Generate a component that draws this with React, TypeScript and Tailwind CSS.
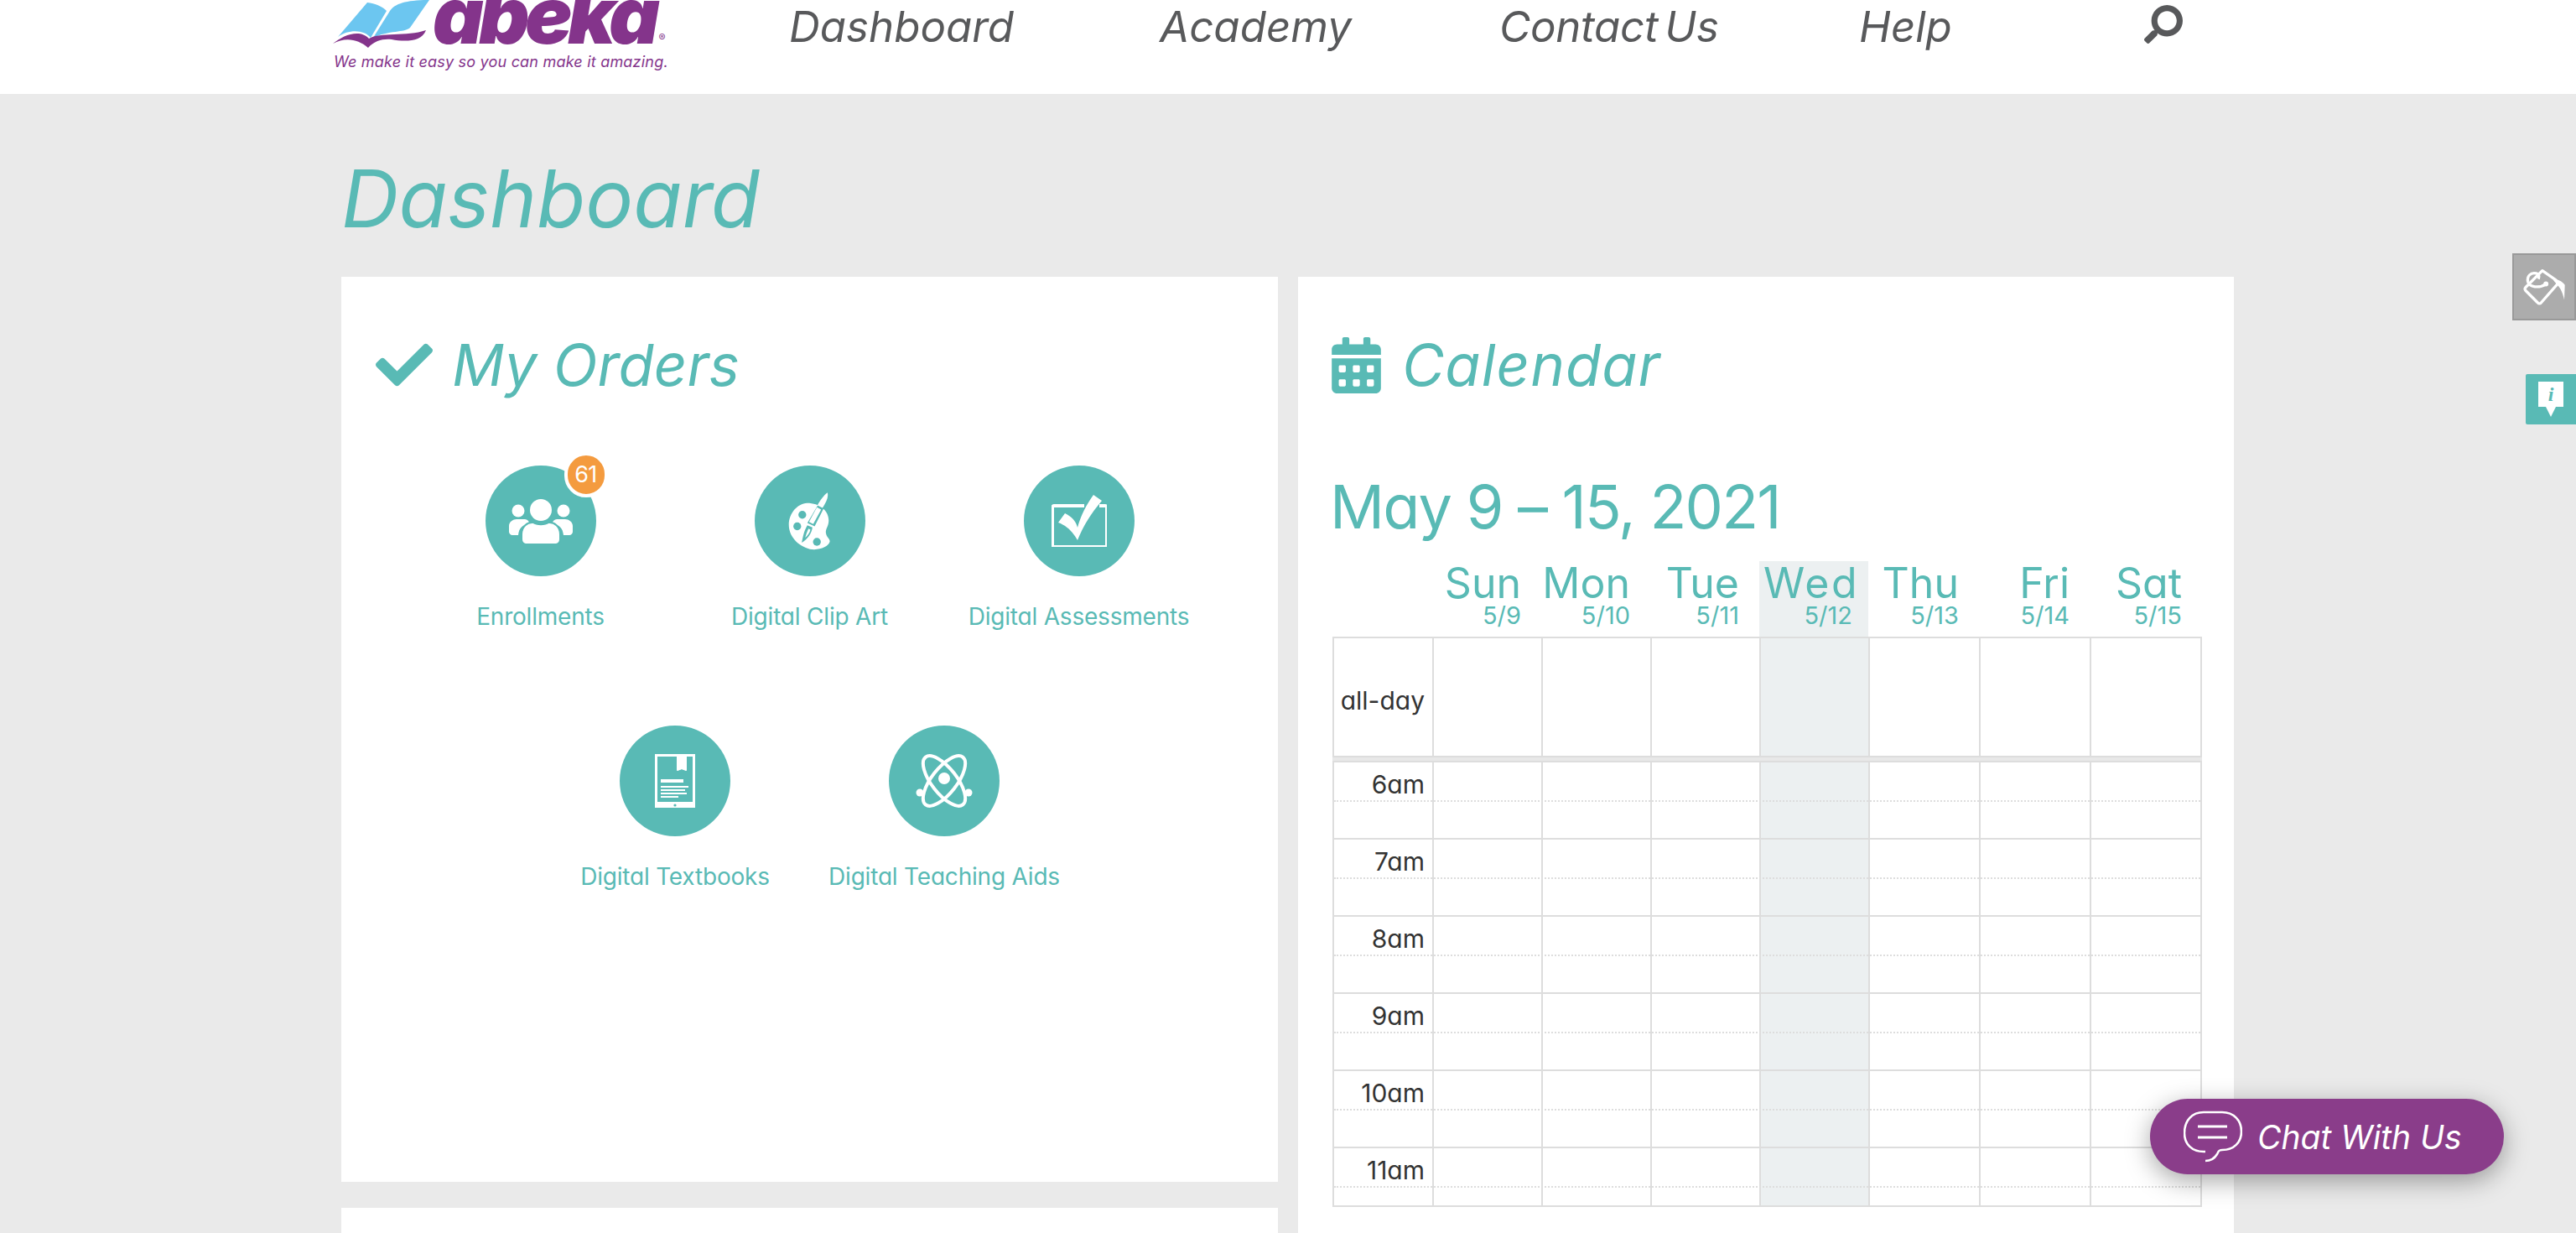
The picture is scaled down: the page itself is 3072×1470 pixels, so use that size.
import { FaCalendarAlt, FaCheck, FaSearch } from "react-icons/fa";

const DISPLAY = "font-['Inter','Lato',sans-serif] [font-feature-settings:'cv11']";

const NAV = [
  { label: "Dashboard", cls: "w-[442px]" },
  { label: "Academy", cls: "w-[405px]" },
  { label: "Contact Us", cls: "w-[429px] tracking-[-0.3px] [word-spacing:-6px]" },
  { label: "Help", cls: "w-[339px]" },
];

const DAYS = [
  { name: "Sun", date: "5/9" },
  { name: "Mon", date: "5/10" },
  { name: "Tue", date: "5/11" },
  { name: "Wed", date: "5/12", today: true },
  { name: "Thu", date: "5/13" },
  { name: "Fri", date: "5/14" },
  { name: "Sat", date: "5/15" },
];

const HOURS = ["6am", "7am", "8am", "9am", "10am", "11am"];

function PeopleIcon() {
  return (
    <svg viewBox="0 0 76 54" className="w-[76px] h-[54px]" fill="#fff">
      <circle cx="38" cy="14" r="13" />
      <circle cx="11" cy="15" r="7.5" />
      <circle cx="65" cy="15" r="7.5" />
      <path d="M0 33C0 28 5 25 9 25H17C22 25 24 27 24 30C16 32 12 35 11 44H4C2 44 0 42 0 40Z" />
      <path d="M76 33C76 28 71 25 67 25H59C54 25 52 27 52 30C60 32 64 35 65 44H72C74 44 76 42 76 40Z" />
      <path
        d="M15 49V43C15 34 22 28 29 29C33 32 43 32 47 29C54 28 61 34 61 43V49C61 52 59 55 56 55H20C17 55 15 52 15 49Z"
        stroke="#59bab5"
        strokeWidth="2"
      />
    </svg>
  );
}

function PaletteIcon() {
  return (
    <svg viewBox="118 92 152 212" className="w-[51px] h-[71px]">
      <path
        d="M185 133C150 135 120 170 120 210C120 250 150 285 195 297C225 303 262 290 266 270C266 258 255 258 252 240C250 225 262 215 262 195C262 160 230 133 185 133Z"
        fill="#fff"
      />
      <circle cx="168" cy="175" r="14" fill="#59bab5" />
      <circle cx="150" cy="216" r="14" fill="#59bab5" />
      <circle cx="220" cy="271" r="14" fill="#59bab5" />
      <path d="M226 136L246 148L212 216L186 204Z" fill="#59bab5" />
      <path d="M186 212L204 220C202 240 188 262 166 274C170 256 172 236 186 212Z" fill="#59bab5" />
      <path d="M190 224L197 228C194 240 186 250 178 256C182 246 184 236 190 224Z" fill="#fff" />
      <path d="M258 96C262 115 250 135 240 150L222 141C230 125 245 105 258 96Z" fill="#fff" />
      <path d="M220 148L235 156L207 208L192 200Z" fill="#fff" />
    </svg>
  );
}

function AssessmentIcon() {
  return (
    <svg viewBox="0 0 66 62" className="w-[66px] h-[62px]">
      <path
        d="M39 13H3C2 13 1 14 1 15V60C1 61 2 62 3 62H64C65 62 66 61 66 60V15C66 14 65 13 64 13H57"
        fill="none"
        stroke="#fff"
        strokeWidth="4"
      />
      <path d="M8 33L16 22C24 26 29 31 31 39C35 24 42 11 50 0L60 7C47 22 38 37 31 54C26 45 19 37 8 33Z" fill="#fff" />
    </svg>
  );
}

function TabletIcon() {
  return (
    <svg viewBox="0 0 50 66" className="w-[50px] h-[66px]">
      <path d="M1 1H49V65H1Z" fill="#fff" />
      <path d="M4 4H27V21L33 19L39 21V4H46V58H4Z" fill="#59bab5" />
      <path d="M28 1H38V21L33 19L28 21Z" fill="#fff" />
      <rect x="8" y="31" width="27" height="4" fill="#fff" />
      <rect x="8" y="39" width="33" height="2" fill="#fff" />
      <rect x="8" y="43" width="29" height="2" fill="#fff" />
      <rect x="8" y="47" width="31" height="2" fill="#fff" />
      <rect x="8" y="51" width="21" height="2" fill="#fff" />
      <circle cx="25" cy="62" r="1.6" fill="#59bab5" />
    </svg>
  );
}

function AtomIcon() {
  return (
    <svg viewBox="0 0 68 64" className="w-[68px] h-[64px]" fill="none" stroke="#fff" strokeWidth="4">
      <ellipse cx="34" cy="32" rx="15" ry="36" transform="rotate(-38 34 32)" />
      <ellipse cx="34" cy="32" rx="15" ry="36" transform="rotate(38 34 32)" />
      <circle cx="34" cy="29" r="7" fill="#fff" stroke="none" />
      <circle cx="5" cy="46" r="4.5" fill="#fff" stroke="none" />
      <circle cx="63" cy="46" r="4.5" fill="#fff" stroke="none" />
    </svg>
  );
}

function OrderItem({
  label,
  children,
  badge,
}: {
  label: string;
  children: React.ReactNode;
  badge?: string;
}) {
  return (
    <div className="w-[321px] h-[310px] flex flex-col items-center">
      <div className="relative w-[132px] h-[132px] rounded-full bg-[#59bab5] flex items-center justify-center">
        {children}
        {badge && (
          <span className="absolute left-[94px] top-[-16px] w-[44px] h-[46px] box-content rounded-full bg-[#f49b3f] border-[4px] border-white flex items-center justify-center text-white text-[27px] tracking-[-0.5px] font-['Inter',sans-serif]">
            {badge}
          </span>
        )}
      </div>
      <div className={`mt-[28px] text-[28px] leading-[40px] tracking-[-0.2px] whitespace-nowrap text-[#59bab5] ${DISPLAY}`}>
        {label}
      </div>
    </div>
  );
}

function MyOrders() {
  return (
    <section className="bg-white h-[1079px] pt-[70px]">
      <div className="flex items-center pl-[32px] h-[70px]">
        <FaCheck className="w-[86px] h-[68px] text-[#59bab5]" />
        <h2 className={`ml-[14px] text-[69px] leading-none italic text-[#59bab5] ${DISPLAY}`}>My Orders</h2>
      </div>
      <div className="mt-[85px] flex flex-wrap justify-center">
        <OrderItem label="Enrollments" badge="61">
          <PeopleIcon />
        </OrderItem>
        <OrderItem label="Digital Clip Art">
          <PaletteIcon />
        </OrderItem>
        <OrderItem label="Digital Assessments">
          <AssessmentIcon />
        </OrderItem>
        <OrderItem label="Digital Textbooks">
          <TabletIcon />
        </OrderItem>
        <OrderItem label="Digital Teaching Aids">
          <AtomIcon />
        </OrderItem>
      </div>
    </section>
  );
}

function Calendar() {
  return (
    <section className="bg-white h-[1140px] pl-[41px] pr-[38px] pt-[70px]">
      <div className="flex items-center h-[70px]">
        <FaCalendarAlt className="-ml-[1px] w-[59px] h-[67px] text-[#59bab5]" />
        <h2 className={`ml-[25px] text-[69px] leading-none italic tracking-[1px] text-[#59bab5] ${DISPLAY}`}>Calendar</h2>
      </div>
      <div className={`-ml-[3px] mt-[92px] text-[72px] leading-[84px] tracking-[-1.8px] text-[#59bab5] ${DISPLAY}`}>May 9 – 15, 2021</div>

      {/* day heads */}
      <div className="mt-[23px] grid grid-cols-[119px_130px_130px_130px_130px_132px_132px_134px] h-[90px]">
        <div />
        {DAYS.map((d) => (
          <div
            key={d.name}
            className={`flex flex-col items-end pt-[2px] text-[#59bab5] ${DISPLAY} ${d.today ? "bg-[#ecf0f1] pr-[11px]" : "pr-[24px]"}`}
          >
            <span className={`text-[50px] leading-[48px] whitespace-nowrap ${d.today ? "tracking-[2.5px]" : ""}`}>{d.name}</span>
            <span className={`text-[29px] leading-[30px] ${d.today ? "pr-[8px]" : ""}`}>{d.date}</span>
          </div>
        ))}
      </div>

      {/* grid */}
      <div className="relative h-[680px] overflow-hidden border-y-2 border-[#dddddd]">
        <div className="grid grid-cols-[117px_130px_130px_130px_130px_132px_132px_132px] h-[140px] border-x-2 border-[#dddddd]">
          <div className={`flex items-center justify-end pr-[9px] pt-[8px] text-[#333] text-[30px] ${DISPLAY}`}>all-day</div>
          {DAYS.map((d) => (
            <div key={d.name} className={`border-l-2 border-[#dddddd] ${d.today ? "bg-[#ecf0f1]" : ""}`} />
          ))}
        </div>
        <div className="h-[8px] border-y-2 border-[#dddddd] bg-[#e8e8e8]" />
        {HOURS.map((h) => (
          <div key={h} className="grid grid-cols-[117px_130px_130px_130px_130px_132px_132px_132px] h-[92px] border-x-2 border-b-2 border-[#dddddd] relative">
            <div className={`pr-[9px] pt-[6px] text-right text-[#333] text-[30px] leading-[40px] ${DISPLAY}`}>{h}</div>
            {DAYS.map((d) => (
              <div key={d.name} className={`border-l-2 border-[#dddddd] ${d.today ? "bg-[#ecf0f1]" : ""}`} />
            ))}
            <div className="absolute inset-x-0 top-[45px] border-t-2 border-dotted border-[#dddddd]" />
          </div>
        ))}
      </div>
    </section>
  );
}

export default function App() {
  return (
    <div className="relative h-screen overflow-hidden bg-[#eaeaea]">
      <header className="h-[112px] bg-white flex overflow-hidden pl-[397px]">
        <div className="w-[544px] shrink-0 relative">
          <div className="flex items-start h-[56px]">
            <svg viewBox="0 0 116 57" className="w-[116px] h-[57px] shrink-0">
              <path d="M6 44L41 3C50 4 60 8 64 13L45 45C38 36 20 34 6 44Z" fill="#6cc6f0" />
              <path d="M48 45L68 13C74 4 88 0 115 0L92 33C86 39 66 36 48 45Z" fill="#6cc6f0" />
              <path d="M0 52C12 42 32 34 43 46C56 38 88 44 111 36C106 50 86 50 70 47C60 46 50 48 42 57C30 46 14 44 0 52Z" fill="#84348b" />
            </svg>
            <span className={`ml-[3px] mt-[-12px] text-[94px] leading-[60px] font-black italic tracking-[-5.6px] text-[#84348b] ${DISPLAY}`}>
              abeka
            </span>
            <span className="ml-[4px] mt-[38px] text-[12px] leading-[14px] text-[#84348b] font-['Inter',sans-serif]">®</span>
          </div>
          <div className={`ml-[1px] mt-[6px] text-[18px] leading-[24px] tracking-[0.2px] italic whitespace-nowrap text-[#84348b] ${DISPLAY}`}>
            We make it easy so you can make it amazing.
          </div>
        </div>
        <nav className="flex items-start pt-[2px]">
          {NAV.map((n) => (
            <a key={n.label} className={`${n.cls} text-[51px] leading-[60px] italic text-[#58595b] whitespace-nowrap ${DISPLAY}`}>
              {n.label}
            </a>
          ))}
          <FaSearch className="mt-[4px] w-[48px] h-[46px] text-[#58595b] -scale-x-100" />
        </nav>
      </header>

      <main className="ml-[407px] w-[2257px]">
        <h1 className={`h-[218px] pt-[70px] text-[95px] leading-[110px] italic text-[#59bab5] ${DISPLAY}`}>Dashboard</h1>
        <div className="grid grid-cols-[1117px_1116px] gap-x-[24px]">
          <div className="flex flex-col gap-[31px]">
            <MyOrders />
            <section className="bg-white h-[100px]" />
          </div>
          <Calendar />
        </div>
      </main>

      {/* side tabs */}
      <div className="absolute right-0 top-[302px] w-[76px] h-[80px] bg-[#acacac] border-[2px] border-[#999] flex items-center justify-center">
        <svg viewBox="150 120 160 140" className="w-[53px] h-[47px]" fill="none" stroke="#fff" strokeWidth="10" strokeLinejoin="round">
          <path d="M222 130L162 190C158 195 158 198 162 202L205 245C209 250 214 250 218 245L282 172Z" />
          <path d="M235 178C210 195 175 190 170 170C166 150 180 135 200 140C210 143 212 150 208 160" />
          <circle cx="235" cy="178" r="9" fill="#fff" stroke="none" />
          <path d="M262 165C280 160 295 170 303 182L301 235C296 215 290 195 276 182Z" fill="#fff" stroke="none" />
        </svg>
      </div>
      <div className="absolute right-0 top-[446px] w-[60px] h-[60px] bg-[#59bab5] rounded-l-[2px] flex items-start justify-center pt-[9px]">
        <div className="relative w-[30px] h-[30px] bg-white flex items-center justify-center">
          <span className="text-[#59bab5] text-[24px] leading-none font-bold italic font-['Liberation_Serif',serif]">i</span>
          <div className="absolute left-[9px] top-[30px] border-x-[6px] border-x-transparent border-t-[12px] border-t-white" />
        </div>
      </div>

      {/* chat */}
      <button
        type="button"
        className="absolute left-[2564px] top-[1310px] w-[422px] h-[90px] rounded-full bg-[#8a3d8a] shadow-[0_8px_30px_rgba(0,0,0,0.35)] flex items-center pl-[40px]"
      >
        <svg viewBox="0 0 70 62" className="w-[70px] h-[62px]" fill="none" stroke="#fff" strokeWidth="2.6">
          <path d="M26 49H24C10 49 1 40 1 27C1 12 10 2 24 2H46C60 2 69 12 69 25C69 38 60 47 46 47C41 47 42 49 40 52C37 57 33 60 26 60" />
          <path d="M17 19H52M17 32H52" strokeWidth="3" />
        </svg>
        <span className={`ml-[18px] text-[39px] leading-none italic text-white whitespace-nowrap ${DISPLAY}`}>Chat With Us</span>
      </button>
    </div>
  );
}
